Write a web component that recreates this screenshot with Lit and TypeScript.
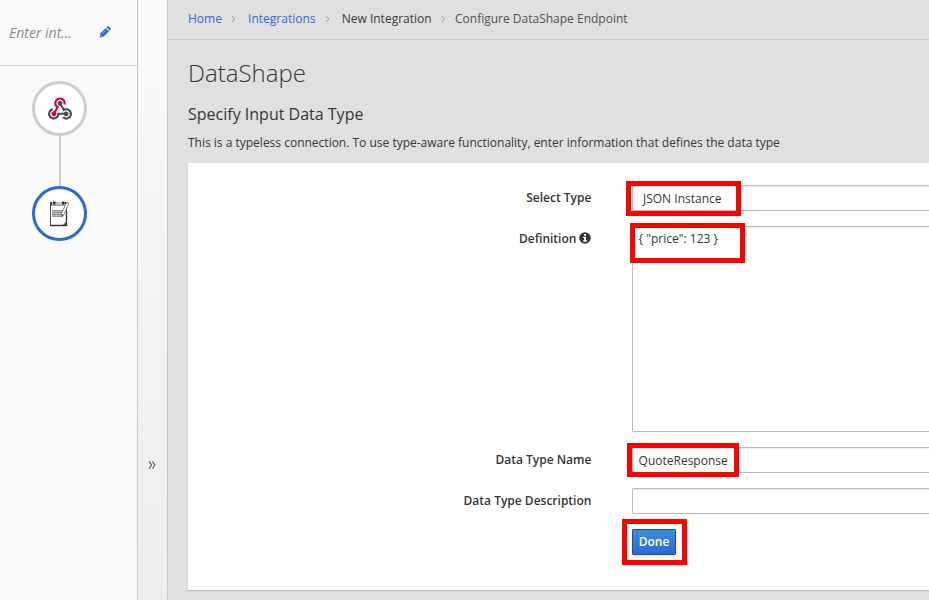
import { LitElement, html, css, svg } from "lit";
import { customElement } from "lit/decorators.js";

const pencil = svg`<svg class="pencil" viewBox="0 0 12 12"><path d="M.6 11.400l.6-3.900L6.800 1.900l3.300 3.300-5.600 5.600zM7.500 1.200l.8-.8q.7-.6 1.400 0l1.900 1.900q.6.700 0 1.400l-.8.800z" fill="#2b6bd3"/><path d="M2.900 8L7.400 3.500" stroke="#9cbcf0" stroke-width=".7"/><path d="M1.700 9l1.300 1.300-1.100.3-.5-.5z" fill="#fff"/></svg>`;

const webhook = svg`<svg class="hook" viewBox="0 0 256 239">
<path fill="#d9005f" d="M119.540 100.503C108.930 118.339 98.765 135.611 88.388 152.754C85.723 157.154 84.404 160.739 86.533 166.333C92.411 181.787 84.119 196.826 68.535 200.908C53.838 204.759 39.519 195.100 36.603 179.365C34.019 165.438 44.827 151.785 60.182 149.608C61.469 149.424 62.782 149.403 64.945 149.241L88.303 110.073C73.612 95.465 64.868 78.389 66.803 57.229C68.171 42.272 74.053 29.346 84.803 18.752C105.393-1.536 136.805-4.821 161.049 10.751C184.333 25.709 194.997 54.845 185.907 79.782L164.564 73.992C167.418 60.127 165.307 47.677 155.956 37.011C149.778 29.969 141.850 26.278 132.835 24.918C114.764 22.188 97.021 33.798 91.756 51.536C85.780 71.667 94.825 88.111 119.540 100.503Z"/>
<path fill="#4b4b4b" d="M149.841 79.411L172.428 119.246C210.449 107.483 239.114 128.530 249.399 151.063C261.820 178.282 253.329 210.520 228.933 227.312C203.893 244.551 172.226 241.606 150.041 219.462L167.448 204.896C189.360 219.088 208.525 218.420 222.753 201.614C234.886 187.277 234.623 165.900 222.138 151.864C207.730 135.667 188.431 135.173 165.103 150.721C155.426 133.553 145.581 116.522 136.210 99.230C133.051 93.402 129.562 90.021 122.441 88.787C110.547 86.725 102.869 76.512 102.408 65.070C101.955 53.754 108.622 43.525 119.042 39.539C129.364 35.591 141.477 38.778 148.420 47.554C154.094 54.724 155.897 62.794 152.911 71.637C152.081 74.103 151.006 76.489 149.841 79.411Z"/>
<path fill="#4b4b4b" d="M167.707 187.210H121.936C117.550 205.254 108.074 219.822 91.746 229.086C79.054 236.286 65.374 238.727 50.814 236.377C24.006 232.053 2.086 207.920.156 180.745C-2.028 149.962 19.131 122.599 47.334 116.453L53.196 137.717C27.320 150.919 18.364 167.553 25.605 188.353C31.981 206.657 50.090 216.690 69.753 212.810C89.833 208.848 99.957 192.160 98.721 165.378C117.757 165.378 136.809 165.181 155.847 165.475C163.281 165.592 169.020 164.821 174.620 158.267C183.841 147.483 200.811 148.456 210.741 158.641C220.889 169.050 220.403 185.798 209.664 195.768C199.303 205.388 182.933 204.874 173.240 194.509C171.248 192.372 169.678 189.835 167.707 187.210Z"/></svg>`;

const notepad = svg`<svg class="note" viewBox="0 0 20 26">
<path d="M.5 2V24.500H16.500V2" fill="#fff" stroke="#555"/>
<path d="M0 1h17v3H0z" fill="#bdbdbd"/><path d="M0 1h2v3H0zM15 1h2.500v3H15z" fill="#444"/>
<path d="M3 .5h2.500v3H3zM12 .5h2.500v3H12z" fill="#333"/>
<path d="M1 4.500h15" stroke="#888" stroke-width=".8"/>
<path d="M2 9h11v7H2z" fill="#bababa"/><path d="M2 9.500h11M2 11.500h10M2 13.500h10M2 15.500h9" stroke="#858585" stroke-width=".7"/>
<path d="M16.500 10v14.500H0" fill="none" stroke="#3c3c3c" stroke-width="1.400"/><path d="M13 24l3.500-3.500v3.500z" fill="#444"/>
<path d="M16.600 1.600l2.200.9-4.800 11-2.300 2-.1-3z" fill="#fff" stroke="#666" stroke-width=".8"/>
<path d="M11.700 13.300l2 .8-2.100 2z" fill="#444"/></svg>`;

const chevron = (cls = "") => svg`<svg class="sep ${cls}" viewBox="0 0 5 8"><path d="M.8 1l3 3-3 3" fill="none" stroke="#9c9c9c" stroke-width="1"/></svg>`;

const info = svg`<svg class="info" viewBox="0 0 12 12"><circle cx="6" cy="6" r="5.800" fill="#363636"/><path d="M5 2h2v1.700H5zM4.200 4.700H7v3.600h.9v1.400H4.200V8.300H5V6h-.8z" fill="#fff"/></svg>`;

@customElement("app-root")
export class AppRoot extends LitElement {
  static styles = css`
    :host { display: flex; width: 100%; height: 600px; overflow: hidden; background: #e0e0e0; color: #363636; font: 12px/20px "Open Sans", sans-serif; }
    * { box-sizing: border-box; }
    svg { display: block; }
    .side { width: 138px; flex: none; background: #fafafa; border-right: 1px solid #c7c7c7; box-shadow: 0 0 3px rgba(0,0,0,.1); }
    .name { height: 66px; border-bottom: 1px solid #d1d1d1; display: flex; align-items: center; padding: 0 0 0 9px; color: #8b8d8f; font-style: italic; font-size: 14px; }
    .name span { width: 90px; }
    .pencil { width: 12px; height: 12px; margin-top: -2px; }
    .flow { display: flex; flex-direction: column; align-items: center; width: 119px; padding-top: 15px; }
    .node { width: 55px; height: 55px; border-radius: 50%; border: 3px solid #cecece; background: #fff; display: grid; place-items: center; }
    .node.active { border-color: #2b6bd3; }
    .link { width: 2px; height: 50px; background: #cecece; }
    .hook { width: 24px; height: 23px; }
    .note { width: 20px; height: 26px; }
    .strip { width: 30px; flex: none; border-right: 1px solid #c7c7c7; background: linear-gradient(#fafafa, #ededed); padding: 461px 0 0 10px; }
    .expand { width: 8px; height: 8px; }
    .main { flex: 1; min-width: 0; }
    .crumbs { height: 40px; border-bottom: 1px solid #cbcbcb; padding: 9px 0 0 20px; display: flex; align-items: flex-start; color: #3a3a3a; white-space: nowrap; }
    .link-text { color: #2b6bd3; }
    .last { color: #505257; }
    .sep { width: 5px; height: 8px; margin: 6px 11.700px 0 9.500px; }
    .sep.tight { margin: 6px 9px 0 9.400px; }
    .page { padding-left: 20px; }
    h1 { margin: 18px 0 0; font-size: 24px; line-height: 30px; font-weight: 300; }
    h2 { margin: 15px 0 0; font-size: 16px; line-height: 22px; font-weight: 400; }
    .intro { margin: 8px 0 0; white-space: nowrap; }
    .card { margin-top: 10px; height: 427px; background: #fff; box-shadow: 0 1px 1px rgba(3,3,3,.17); padding-top: 22px; overflow: hidden; width: 741px; }
    .row { display: grid; grid-template-columns: 403.400px 1fr; column-gap: 40.600px; margin-bottom: 15px; }
    .label { text-align: right; font-weight: 600; line-height: 20px; padding-top: 3px; display: flex; justify-content: flex-end; }
    .info { width: 12px; height: 12px; margin: 3px 0 0 3px; }
    .control { position: relative; }
    .field { height: 26px; width: 320px; border: 1px solid #bbb; border-radius: 1px; padding: 3px 5.600px; line-height: 20px; background: #fff; box-shadow: inset 0 1px 1px rgba(3,3,3,.075); white-space: pre; }
    .select { padding-left: 10px; }
    .area { height: 206px; padding-top: 2px; }
    .mark { position: absolute; border: 5px solid #f00; }
    .m1 { left: -6px; top: -4px; width: 115px; height: 35px; }
    .m2 { left: -2px; top: -3px; width: 115px; height: 40px; }
    .m3 { left: -5px; top: -4px; width: 112px; height: 34px; }
    .m4 { left: -10px; top: -10px; width: 65px; height: 46px; }
    .done { display: block; width: 44px; height: 26px; padding: 0; border: 1px solid #1f4f9c; border-radius: 1px; background: linear-gradient(#3b8edc, #2b6bd3); color: #fff; font: 600 12px/20px "Open Sans", sans-serif; box-shadow: 0 2px 3px rgba(3,3,3,.1); }
  `;

  render() {
    return html`
      <aside class="side">
        <div class="name"><span>Enter int...</span>${pencil}</div>
        <div class="flow">
          <div class="node">${webhook}</div>
          <div class="link"></div>
          <div class="node active">${notepad}</div>
        </div>
      </aside>
      <div class="strip"><svg class="expand" viewBox="0 0 8 8"><path d="M1.200.4L3.500 4 1.200 7.600M4.500.4L6.800 4 4.500 7.600" fill="none" stroke="#5c6066" stroke-width="1.200"/></svg></div>
      <main class="main">
        <nav class="crumbs">
          <span class="link-text">Home</span>${chevron()}
          <span class="link-text">Integrations</span>${chevron()}
          <span>New Integration</span>${chevron("tight")}
          <span class="last">Configure DataShape Endpoint</span>
        </nav>
        <div class="page">
          <h1>DataShape</h1>
          <h2>Specify Input Data Type</h2>
          <p class="intro">This is a typeless connection. To use type-aware functionality, enter information that defines the data type</p>
          <section class="card">
            <div class="row">
              <div class="label">Select Type</div>
              <div class="control"><div class="field select">JSON Instance</div><div class="mark m1"></div></div>
            </div>
            <div class="row">
              <div class="label">Definition${info}</div>
              <div class="control"><div class="field area">{ "price": 123 }</div><div class="mark m2"></div></div>
            </div>
            <div class="row">
              <div class="label">Data Type Name</div>
              <div class="control"><div class="field">QuoteResponse</div><div class="mark m3"></div></div>
            </div>
            <div class="row">
              <div class="label">Data Type Description</div>
              <div class="control"><div class="field"></div></div>
            </div>
            <div class="row">
              <div></div>
              <div class="control"><button class="done">Done</button><div class="mark m4"></div></div>
            </div>
          </section>
        </div>
      </main>
    `;
  }
}
